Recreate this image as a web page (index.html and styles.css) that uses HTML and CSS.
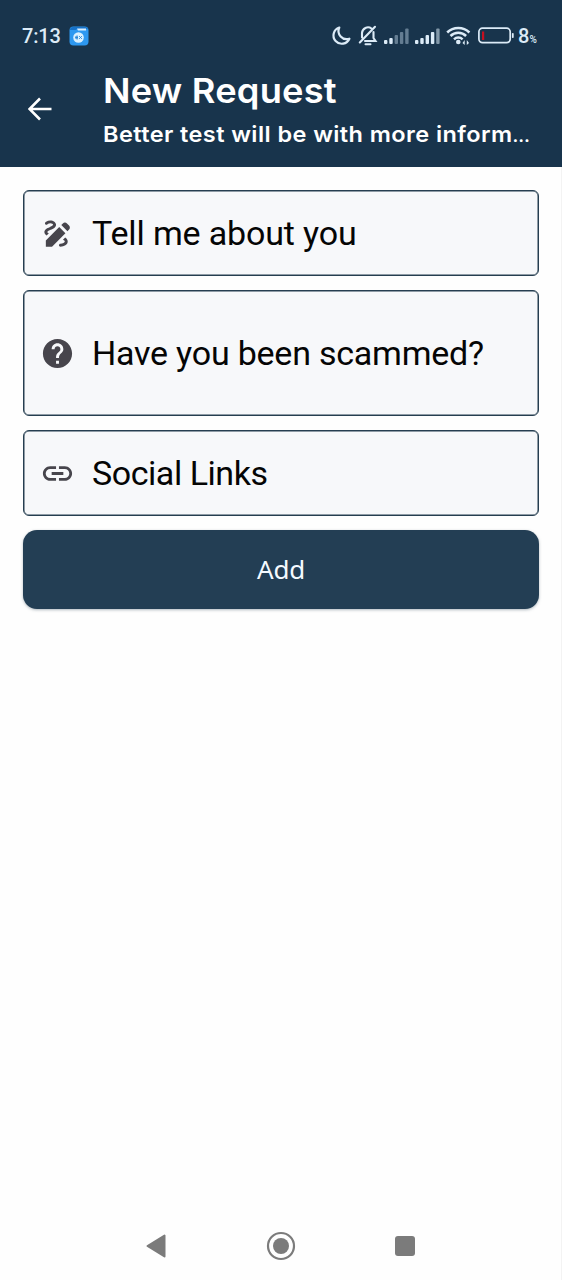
FILE: index.html
```html
<!DOCTYPE html>
<html lang="en">
<head>
<meta charset="utf-8">
<title>New Request</title>
<link rel="stylesheet" href="styles.css">
</head>
<body>
<div class="screen">
  <header class="header">
    <div class="status">
      <span class="time">7:13</span>
      <svg class="app" width="20" height="20" viewBox="0 0 20 20">
        <rect x=".5" y=".5" width="19" height="19" rx="4" fill="#2d98f0"/>
        <path d="M1 4a3 3 0 0 1 3-3h12a3 3 0 0 1 3 2H8L6.500 4H1z" fill="#1672c9"/>
        <path d="M8 2.500h9v2H9z" fill="#d9efff"/>
        <circle cx="9.500" cy="11.500" r="5.300" fill="#d9f0ff"/>
        <path d="M9 10.200H7.800a1.300 1.300 0 0 0 0 2.600H9M6.600 11.500H9M10.200 10.200l2.600 2.600M12.800 10.200l-2.600 2.600" fill="none" stroke="#2586d8"/>
      </svg>
      <svg class="indicators" width="186" height="24" viewBox="330 24 186 24">
        <path d="M339.300 27.500A8.300 8.300 0 1 0 349.400 38.700 8.200 8.200 0 0 1 339.300 27.500Z" fill="none" stroke="#dcebf7" stroke-width="2.200" stroke-linejoin="round"/>
        <g fill="none" stroke="#dcebf7" stroke-width="2.100" stroke-linecap="round">
          <path d="M371.500 28.500A6 6 0 0 0 362 33v4.500M373.500 32v6l2 3H365M359.800 42.500 375 26.800"/>
          <path d="M365.500 44.300h5" stroke-width="2"/>
        </g>
        <g fill="#dcebf7">
          <rect x="384" y="40" width="3.400" height="4" rx="1"/><rect x="389.300" y="38" width="3.400" height="6" rx="1"/>
          <g fill="#647d92"><rect x="394.600" y="35" width="3.400" height="9" rx="1"/><rect x="399.900" y="32" width="3.400" height="12" rx="1"/><rect x="405.200" y="28.500" width="3.400" height="15.500" rx="1"/></g>
          <rect x="415" y="40" width="3.400" height="4" rx="1"/><rect x="420.300" y="38" width="3.400" height="6" rx="1"/><rect x="425.600" y="35" width="3.400" height="9" rx="1"/><rect x="430.900" y="32" width="3.400" height="12" rx="1"/>
          <rect x="436.200" y="28.500" width="3.400" height="15.500" rx="1" fill="#8298a9"/>
          <circle cx="458.300" cy="42" r="2.300"/>
          <path d="m462.500 43 2.200-3v5zM469 43l-2.200-3v5z"/>
        </g>
        <path d="M447.200 32.500a15.800 15.800 0 0 1 22.200 0M450.500 36a11 11 0 0 1 15.600 0M454 39.300a6.300 6.300 0 0 1 8.600 0" fill="none" stroke="#dcebf7" stroke-width="2.500"/>
        <rect x="478.900" y="28.200" width="31.300" height="14.400" rx="3.600" fill="none" stroke="#dcebf7" stroke-width="1.700"/>
        <rect x="482" y="31.500" width="2.200" height="8.500" fill="#c50f20"/>
        <rect x="511.900" y="33" width="1.800" height="5" rx=".8" fill="#dcebf7"/>
      </svg>
      <span class="level">8<small>%</small></span>
    </div>
    <div class="bar">
      <svg class="back" width="24" height="24" viewBox="0 0 24 24"><path d="M23.500 12H2M12 1.500 1.500 12 12 22.500" fill="none" stroke="#fff" stroke-width="2.600"/></svg>
      <div class="titles">
        <h1>New Request</h1>
        <p>Better test will be with more inform<span class="dots">…</span></p>
      </div>
    </div>
  </header>
  <main class="form">
    <div class="field">
      <svg class="icon" viewBox="0 0 24 24"><path d="M18.850 10.390l1.060-1.060c.78-.78.78-2.050 0-2.830L18.500 5.090c-.78-.78-2.050-.78-2.830 0l-1.060 1.060zM13.190 7.560L4 16.760V21h4.240l9.190-9.190zM19 17.500c0 2.190-2.540 3.500-5 3.500-.55 0-1-.45-1-1s.45-1 1-1c1.540 0 3-.73 3-1.500 0-.47-.48-.87-1.230-1.200l1.480-1.480C18.320 15.450 19 16.290 19 17.500zM4.580 13.350C3.610 12.790 3 12.060 3 11c0-1.800 1.890-2.630 3.560-3.360C7.590 7.180 9 6.560 9 6c0-.41-.78-1-2-1-1.260 0-1.800.61-1.830.64-.35.41-.98.46-1.400.12-.41-.34-.49-.95-.15-1.380C3.730 4.240 4.760 3 7 3s4 1.320 4 3c0 1.870-1.930 2.720-3.640 3.470C6.420 9.880 5 10.500 5 11c0 .31.43.6 1.070.86z"/></svg>
      <span class="about">Tell me about you</span>
    </div>
    <div class="field tall">
      <svg class="icon" viewBox="0 0 24 24"><path d="M12 2C6.480 2 2 6.480 2 12s4.480 10 10 10 10-4.480 10-10S17.520 2 12 2zm1 17h-2v-2h2v2zm2.070-7.750l-.9.920C13.450 12.900 13 13.500 13 15h-2v-.5c0-1.100.45-2.100 1.170-2.830l1.240-1.260c.37-.36.59-.86.59-1.410 0-1.100-.9-2-2-2s-2 .9-2 2H8c0-2.210 1.790-4 4-4s4 1.790 4 4c0 .88-.36 1.680-.93 2.250z"/></svg>
      <span class="scammed">Have you been scammed?</span>
    </div>
    <div class="field">
      <svg class="icon" viewBox="0 0 24 24"><path d="M3.900 12c0-1.710 1.390-3.100 3.100-3.100h4V7H7c-2.760 0-5 2.240-5 5s2.240 5 5 5h4v-1.900H7c-1.710 0-3.100-1.390-3.100-3.100zM8 13h8v-2H8v2zm9-6h-4v1.900h4c1.710 0 3.100 1.390 3.100 3.100s-1.390 3.100-3.100 3.100h-4V17h4c2.760 0 5-2.240 5-5s-2.240-5-5-5z"/></svg>
      <span class="social">Social Links</span>
    </div>
    <button class="add">Add</button>
  </main>
  <nav class="nav">
    <svg width="20" height="26" viewBox="0 0 20 26"><path d="M1.500 13 18.500 2.500v21z" fill="#7b7b7b" stroke="#7b7b7b" stroke-width="2" stroke-linejoin="round"/></svg>
    <svg width="30" height="30" viewBox="0 0 30 30"><circle cx="15" cy="15" r="13" fill="none" stroke="#7b7b7b" stroke-width="2.200"/><circle cx="15" cy="15" r="8" fill="#7b7b7b"/></svg>
    <svg width="20" height="20" viewBox="0 0 20 20"><rect width="20" height="20" rx="3" fill="#7b7b7b"/></svg>
  </nav>
</div>
</body>
</html>
```
FILE: styles.css
```css
* { box-sizing: border-box; }
body { margin: 0; background: #fefefe; font-family: Roboto, sans-serif; }
.screen { width: 562px; height: 1280px; display: flex; flex-direction: column; border-right: 1px solid #f3f3f3; }
.header { height: 166.500px; margin-right: -1px; background: #18344c; color: #fff; flex: none; }
.status { height: 72px; padding: 0 22px; display: flex; align-items: center; color: #dcebf7; }
.time { width: 47px; font-size: 20px; font-weight: 500; letter-spacing: -.2px; white-space: nowrap; }
.app { margin-top: -1px; }
.indicators { margin-left: auto; }
.level { width: 22px; margin-left: 2px; font-size: 20px; font-weight: 500; white-space: nowrap; }
.level small { font-size: 10px; }
.bar { display: flex; padding-left: 28px; }
.back { margin-top: 25px; }
.titles { margin-left: 51px; font-family: Inter, sans-serif; }
.titles h1 { margin: 0; font-size: 34px; line-height: 37px; font-weight: 600; letter-spacing: .2px; white-space: nowrap; transform: scaleX(1.066); transform-origin: left; }
.titles p { margin: 11px 0 0; font-size: 22px; line-height: 28px; font-weight: 600; letter-spacing: .4px; white-space: nowrap; transform: scaleX(1.067); transform-origin: left; }
.dots { font-size: 17px; letter-spacing: 0; }
.form { flex: 1; padding: 23px 22px 0 23px; display: flex; flex-direction: column; gap: 14.200px; }
.field { height: 86px; display: flex; align-items: center; gap: 17px; padding: 1px 0 0 16px; border: 1px solid #263e50; border-radius: 6px; background: #f7f8fa; box-shadow: inset 0 0 0 .5px #263e50; color: #050505; font-size: 34px; white-space: nowrap; }
.tall { height: 126px; }
.about { letter-spacing: -.15px; }
.scammed { letter-spacing: -.22px; }
.social { letter-spacing: -.45px; }
.icon { width: 35px; height: 35px; fill: #47454c; flex: none; }
.add { height: 78.500px; padding: 0; border: 0; border-radius: 14px; background: #233e54; color: #f5faff; font: 26px "Noto Sans", sans-serif; letter-spacing: -.2px; box-shadow: 0 1px 3px #6b7b8988; }
.nav { height: 68px; padding: 0 146px; display: flex; align-items: center; justify-content: space-between; }
```
